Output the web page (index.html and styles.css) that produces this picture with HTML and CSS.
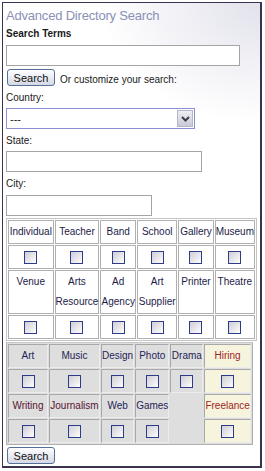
FILE: index.html
```html
<!DOCTYPE html>
<html lang="en">
  <head>
    <meta charset="UTF-8" />
    <meta name="viewport" content="width=device-width, initial-scale=1.0" />
    <title>Advanced Directory Search</title>
    <link rel="stylesheet" href="styles.css">
  </head>
  <body>
    <div class="panel">
      <h1 class="title">Advanced Directory Search</h1>

      <form class="search-form" onsubmit="return false">
        <label class="label label-bold" for="terms">Search Terms</label>
        <input type="text" id="terms" class="field field-terms" />

        <div class="quick-row">
          <button class="btn">Search</button>
          <span class="quick-text">Or customize your search:</span>
        </div>

        <label class="label" for="country">Country:</label>
        <div class="select-wrap">
          <select id="country" class="field field-country">
            <option>---</option>
          </select>
          <span class="select-arrow">
            <svg width="9" height="6" viewBox="0 0 9 6">
              <path d="M1 1 L4.5 4.5 L8 1" fill="none" stroke="#3c3c4c" stroke-width="2" />
            </svg>
          </span>
        </div>

        <label class="label" for="state">State:</label>
        <input type="text" id="state" class="field field-state" />

        <label class="label" for="city">City:</label>
        <input type="text" id="city" class="field field-city" />

        <table class="types">
          <tr>
            <td class="c1">Individual</td>
            <td class="c2">Teacher</td>
            <td class="c3">Band</td>
            <td class="c4">School</td>
            <td class="c5">Gallery</td>
            <td class="c6">Museum</td>
          </tr>
          <tr class="checks">
            <td><input type="checkbox" class="check" /></td>
            <td><input type="checkbox" class="check" /></td>
            <td><input type="checkbox" class="check" /></td>
            <td><input type="checkbox" class="check" /></td>
            <td><input type="checkbox" class="check" /></td>
            <td><input type="checkbox" class="check" /></td>
          </tr>
          <tr class="tall">
            <td>Venue</td>
            <td>Arts<br />Resource</td>
            <td>Ad<br />Agency</td>
            <td>Art<br />Supplier</td>
            <td>Printer</td>
            <td>Theatre</td>
          </tr>
          <tr class="checks">
            <td><input type="checkbox" class="check" /></td>
            <td><input type="checkbox" class="check" /></td>
            <td><input type="checkbox" class="check" /></td>
            <td><input type="checkbox" class="check" /></td>
            <td><input type="checkbox" class="check" /></td>
            <td><input type="checkbox" class="check" /></td>
          </tr>
        </table>

        <table class="genres">
          <tr>
            <td class="g1">Art</td>
            <td class="g2">Music</td>
            <td class="g3">Design</td>
            <td class="g4">Photo</td>
            <td class="g5">Drama</td>
            <td class="g6 job">Hiring</td>
          </tr>
          <tr class="checks">
            <td><input type="checkbox" class="check" /></td>
            <td><input type="checkbox" class="check" /></td>
            <td><input type="checkbox" class="check" /></td>
            <td><input type="checkbox" class="check" /></td>
            <td><input type="checkbox" class="check" /></td>
            <td class="job"><input type="checkbox" class="check" /></td>
          </tr>
          <tr>
            <td class="write">Writing</td>
            <td class="write">Journalism</td>
            <td>Web</td>
            <td>Games</td>
            <td class="empty" rowspan="2"></td>
            <td class="job">Freelance</td>
          </tr>
          <tr class="checks">
            <td><input type="checkbox" class="check" /></td>
            <td><input type="checkbox" class="check" /></td>
            <td><input type="checkbox" class="check" /></td>
            <td><input type="checkbox" class="check" /></td>
            <td class="job"><input type="checkbox" class="check" /></td>
          </tr>
        </table>

        <button class="btn btn-bottom">Search</button>
      </form>
    </div>
  </body>
</html>
```

FILE: styles.css
```css
* {
  margin: 0;
  padding: 0;
  box-sizing: border-box;
}

body {
  font-family: "Liberation Sans", Arial, sans-serif;
  font-size: 10px;
  color: #1a1a1a;
  background: white;
}

.panel {
  width: 260px;
  height: 466px;
  margin: 2px;
  padding: 4px 3px 4px 3px;
  border: 1px solid #3a3350;
  border-right-width: 2px;
  border-bottom-width: 2px;
  background:
    radial-gradient(ellipse 160px 120px at 100% 0%, #e2e2ec 0%, rgba(255, 255, 255, 0) 100%),
    white;
}

.title {
  font-size: 13px;
  font-weight: normal;
  line-height: 18px;
  letter-spacing: -0.2px;
  color: #8a8fb6;
}

.search-form {
  display: flex;
  flex-direction: column;
  align-items: flex-start;
}

.label {
  display: block;
  line-height: 14px;
  margin-top: 5px;
  color: #1a1a1a;
}

.label-bold {
  font-weight: bold;
  margin-top: 2px;
}

.field {
  height: 21px;
  margin-top: 3px;
  border: 1px solid #a4a4a4;
  background: white;
  font-family: inherit;
  font-size: 11px;
  padding: 0 3px;
}

.field-terms {
  width: 234px;
  margin-top: 4px;
}

.field-state {
  width: 196px;
}

.field-city {
  width: 146px;
  margin-top: 4px;
}

.select-wrap {
  position: relative;
  margin-top: 3px;
}

.field-country {
  display: block;
  width: 189px;
  margin-top: 0;
  border-color: #8c90d0;
  appearance: none;
  -webkit-appearance: none;
  color: #1a1a1a;
}

.select-arrow {
  position: absolute;
  top: 2px;
  right: 2px;
  width: 16px;
  height: 17px;
  display: flex;
  align-items: center;
  justify-content: center;
  border: 1px solid #b4b6cc;
  background: linear-gradient(to bottom, #eeeef4, #c8c9d6);
  pointer-events: none;
}

.quick-row {
  display: flex;
  align-items: center;
  gap: 5px;
  margin-top: 3px;
}

.quick-text {
  margin-top: 4px;
}

.btn {
  width: 48px;
  height: 17px;
  margin-left: 1px;
  border: 1px solid #56709c;
  border-radius: 3px;
  background: linear-gradient(to bottom, #ffffff, #e6e8f0 60%, #d4d8e4);
  font-family: inherit;
  font-size: 11px;
  color: #111;
  cursor: pointer;
}

.btn-bottom {
  margin-top: 2px;
}

table {
  border-collapse: separate;
  border-spacing: 1px;
  table-layout: fixed;
  text-align: center;
}

table td {
  padding: 1px 0;
  line-height: 20px;
  height: 24px;
  vertical-align: top;
  white-space: nowrap;
}

.types {
  margin-top: 2px;
  border: 1px solid #c4c4c4;
  color: #1c1c48;
}

.types td {
  border: 1px solid #b0b0b0;
  background: white;
}

.types .c1 { width: 47px; }
.types .c2 { width: 44px; }
.types .c3 { width: 36px; }
.types .c4 { width: 42px; }
.types .c5 { width: 37px; }
.types .c6 { width: 38px; }

.types .tall td {
  height: 44px;
}

.checks td {
  vertical-align: middle;
  line-height: 0;
}

.check {
  appearance: none;
  -webkit-appearance: none;
  display: inline-block;
  width: 13px;
  height: 13px;
  border: 1px solid #2e3a8a;
  background: linear-gradient(135deg, #cfcfd4 0%, #f4f4f6 80%, #ffffff 100%);
  vertical-align: middle;
}

.genres {
  margin-top: 1px;
  border: 1px solid #b0b0b0;
  border-top-color: #c8c8c8;
  background: #dedede;
  color: #1e1e58;
}

.genres td {
  border: 1px solid;
  border-color: #a8a8a8 #ececec #ececec #a8a8a8;
  background: #dedede;
}

.genres .g1 { width: 40px; }
.genres .g2 { width: 51px; }
.genres .g3 { width: 32px; }
.genres .g4 { width: 33px; }
.genres .g5 { width: 33px; }
.genres .g6 { width: 43px; }

.genres td.job {
  background: #f6f4dc;
  color: #a02424;
}

.genres td.write {
  color: #5a1430;
}

.genres td.empty {
  border: none;
}
```
